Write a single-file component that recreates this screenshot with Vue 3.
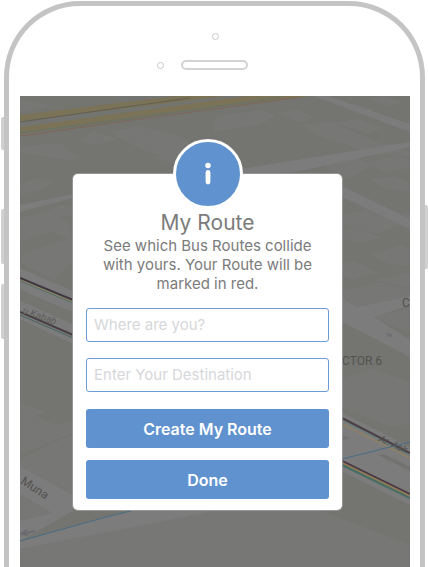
<script setup>
import { ref } from 'vue'

const origin = ref('')
const destination = ref('')

const blocks = [
  '20,99 52,106 20,112',
  '94,131 118,139 96,145 78,141',
  '110,132 137,126 178,135 204,150 169,158 142,150',
  '46,144 60,143 81,159 68,160 20,153 20,147',
  '152,158 183,150 214,158 180,165',
  '33,179 42,178 53,182 40,190 20,195 20,185',
  '20,218 49,210 70,222 72,240 52,232 20,242',
  '46,211 62,205 72,207 72,216 56,216',
  '23,253 72,238 72,262 54,281 20,262',
  '215,116 262,110 276,116 260,125 214,132',
  '276,113 299,110 314,118 299,122',
  '302,125 330,121 380,143 358,148 325,139',
  '334,123 358,119 382,128 368,134',
  '342,108 358,104 376,110 360,114',
  '366,99 384,96 402,102 390,106',
  '344,142 362,138 410,152 410,156 366,154',
  '323,161 352,156 372,166 348,178 326,169',
  '366,163 396,155 410,160 410,168 384,172',
  '370,180 394,176 410,183 410,191 386,189',
  '344,214 366,210 400,224 378,234 343,224',
  '343,230 358,227 380,238 358,244 343,238',
  '374,218 410,212 410,225 390,226',
  '370,254 402,245 410,249 410,266 388,264',
  '343,264 354,261 378,273 352,280 343,276',
  '376,280 406,273 410,275 410,286 398,286',
  '343,291 380,282 410,290 410,296 357,306 343,299',
  '374,316 410,308 410,332 389,325',
  '20,402 46,412 36,416 56,425 72,420 72,433 20,455',
  '20,459 72,434 72,494 41,477 20,466',
  '20,494 51,513 20,521',
  '20,550 110,522 210,500 320,510 410,545 410,567 20,567',
  '343,378 374,369 410,382 410,424 391,427 343,408',
]

const lines = [
  ['20,122 104,110 190,98', '#625e50', 1],
  ['20,133 118,120 214,107 282,97', '#677366', 1],
  ['20,136 132,120 214,109 300,97', '#7e6657', 1],
  ['20,278 73,300', '#403841', 2],
  ['20,280 73,302', '#93805b', 1],
  ['20,281 73,303', '#4e7369', 1],
  ['20,312 73,335', '#493e43', 2],
  ['20,315 73,338', '#46645e', 1],
  ['342,418 410,453', '#4c3d46', 2],
  ['342,420 410,455', '#5b7c70', 1],
  ['342,424 410,458', '#9b8153', 1],
  ['342,461 410,494', '#4b3945', 2],
  ['342,463 410,496', '#8f7a55', 2],
  ['342,465 410,498', '#456d66', 2],
  ['20,541 110,516 342,459 410,442', '#466c86', 1],
]
</script>

<template>
  <div class="stage">
    <div class="phone">
      <i class="key mute"></i>
      <i class="key up"></i>
      <i class="key down"></i>
      <i class="key power"></i>

      <div class="bezel">
        <span class="camera"></span>
        <div class="earpiece">
          <span class="sensor"></span>
          <span class="speaker"></span>
        </div>
      </div>

      <main class="screen">
        <svg class="map" viewBox="20 96 390 471" preserveAspectRatio="xMidYMin slice" aria-hidden="true">
          <rect x="20" y="96" width="390" height="471" fill="#747471" />
          <g fill="#777775">
            <polygon v-for="b in blocks" :key="b" :points="b" />
          </g>
          <g fill="#7c7c7c">
            <polygon points="314,96 328,96 410,124 410,132" />
            <polygon points="240,169 410,142 410,147 300,171 240,178" />
            <polygon points="342,186 410,219 410,229 342,197" />
            <polygon points="20,205 73,194 73,198 20,212" />
            <polygon points="20,268 73,291 73,312 20,290" />
            <polygon points="20,301 73,324 73,344 20,319" />
            <polygon points="342,298 357,307 410,296 410,305 374,317 410,340 410,357 342,322" />
            <polygon points="20,466 73,495 73,511 20,541 20,521 52,513 20,494" />
            <polygon points="20,541 130,510 220,510 20,549" />
            <polygon points="342,413 410,447 410,505 342,471" />
          </g>
          <polygon points="378,455 384,454 410,467 410,471" fill="#727270" />
          <polygon points="342,435 350,438 342,440" fill="#727270" />
          <g fill="#7a7357">
            <polygon points="20,115 176,96 228,96 20,121" />
            <polygon points="20,127 246,96 312,96 214,107 20,134" />
          </g>
          <polyline
            v-for="l in lines"
            :key="l[0]"
            :points="l[0]"
            fill="none"
            :stroke="l[1]"
            :stroke-width="l[2]"
          />
          <g fill="none" stroke="#6a6a70" stroke-width="1">
            <path d="M35 531 L22 534 M27 530 L21 534 L28 535" stroke-width="2" />
            <path d="M385 333 L392 336 M387 336 L392 336 L389 333" />
          </g>
          <g class="streets">
            <text transform="translate(22 313) rotate(20)" font-size="10" font-style="italic" fill="#5c5c59">u Kabab</text>
            <text transform="translate(20 483) rotate(33)" font-size="12">Muna</text>
            <text transform="translate(378 441) rotate(24)" font-size="10" font-style="italic">Ar. Ask</text>
            <text x="342" y="365" font-size="12">CTOR 6</text>
            <text x="402" y="307" font-size="12">C</text>
          </g>
        </svg>

        <form class="card" @submit.prevent>
          <div class="badge">
            <svg viewBox="0 0 64 64" aria-hidden="true">
              <circle cx="32" cy="23.5" r="2.7" />
              <rect x="29.6" y="28" width="4.8" height="14.4" rx="2.4" />
            </svg>
          </div>
          <h1>My Route</h1>
          <p>See which Bus Routes collide with yours. Your Route will be marked in red.</p>
          <div class="fields">
            <input v-model="origin" type="text" placeholder="Where are you?" aria-label="Where are you?" />
            <input v-model="destination" type="text" placeholder="Enter Your Destination" aria-label="Enter Your Destination" />
          </div>
          <div class="actions">
            <button type="submit">Create My Route</button>
            <button type="button">Done</button>
          </div>
        </form>
      </main>
    </div>
  </div>
</template>

<style>
body {
  margin: 0;
  background: #fff;
}
</style>

<style scoped>
.stage {
  box-sizing: border-box;
  height: 100vh;
  overflow: hidden;
  padding: 1px 3px 0 4px;
  font-family: Inter, "Liberation Sans", sans-serif;
}

.phone {
  position: relative;
  box-sizing: border-box;
  display: flex;
  flex-direction: column;
  height: 100%;
  padding: 0 10px 0 11px;
  border: 5px solid #c4c4c4;
  border-bottom: 0;
  border-radius: 76px 76px 0 0;
}

.key {
  position: absolute;
  width: 3px;
  background: #d0d0d0;
}

.mute {
  left: -8px;
  top: 111px;
  height: 33px;
  border-radius: 2px 0 0 2px;
}

.up {
  left: -8px;
  top: 203px;
  height: 55px;
  border-radius: 2px 0 0 2px;
}

.down {
  left: -8px;
  top: 278px;
  height: 55px;
  border-radius: 2px 0 0 2px;
}

.power {
  right: -8px;
  top: 199px;
  height: 64px;
  border-radius: 0 2px 2px 0;
}

.bezel {
  box-sizing: border-box;
  display: flex;
  flex-direction: column;
  align-items: center;
  gap: 20px;
  flex: none;
  height: 90px;
  padding-top: 27px;
}

.camera,
.sensor {
  box-sizing: border-box;
  width: 7px;
  height: 7px;
  border: 1px solid #c8c8c8;
  border-radius: 50%;
}

.earpiece {
  display: flex;
  align-items: center;
  gap: 17px;
  padding-right: 25px;
}

.speaker {
  box-sizing: border-box;
  width: 67px;
  height: 10px;
  border: 2px solid #d3d3d3;
  border-radius: 5px;
}

.screen {
  position: relative;
  flex: 1;
  padding: 78px 68px 0 53px;
  overflow: hidden;
}

.map {
  position: absolute;
  inset: 0;
  width: 100%;
  height: 100%;
}

.streets {
  fill: #52524f;
  font-family: Roboto, sans-serif;
}

.card {
  position: relative;
  display: flex;
  flex-direction: column;
  padding: 35px 13px 11px;
  border-radius: 5px;
  background: #fff;
  box-shadow: 0 0 0 1px #969694;
  color: #7b7b7b;
  text-align: center;
}

.badge {
  position: absolute;
  top: -35px;
  left: 50%;
  width: 64px;
  height: 64px;
  margin-left: -35px;
  border: 3px solid #fff;
  border-radius: 50%;
  background: #6092cf;
}

.badge svg {
  display: block;
  fill: #fff;
}

h1 {
  margin: 0;
  font-size: 21px;
  font-weight: 400;
  line-height: 27px;
}

p {
  margin: 0;
  padding: 0 13px;
  font-size: 15px;
  line-height: 19px;
}

.fields {
  display: grid;
  gap: 16px;
  margin-top: 15px;
}

input {
  box-sizing: border-box;
  width: 100%;
  height: 34px;
  padding: 0 7px 2px;
  border: 1px solid #6d9bd8;
  border-radius: 3px;
  background: #fff;
  color: #555;
  font: 15px/20px Inter, "Liberation Sans", sans-serif;
}

input::placeholder {
  color: #d6d7da;
  opacity: 1;
}

.actions {
  display: grid;
  gap: 12px;
  margin-top: 17px;
}

button {
  height: 39px;
  padding: 0;
  border: 0;
  border-radius: 3px;
  background: #6092cf;
  color: #fff;
  font: 600 16px/20px Inter, "Liberation Sans", sans-serif;
}
</style>
